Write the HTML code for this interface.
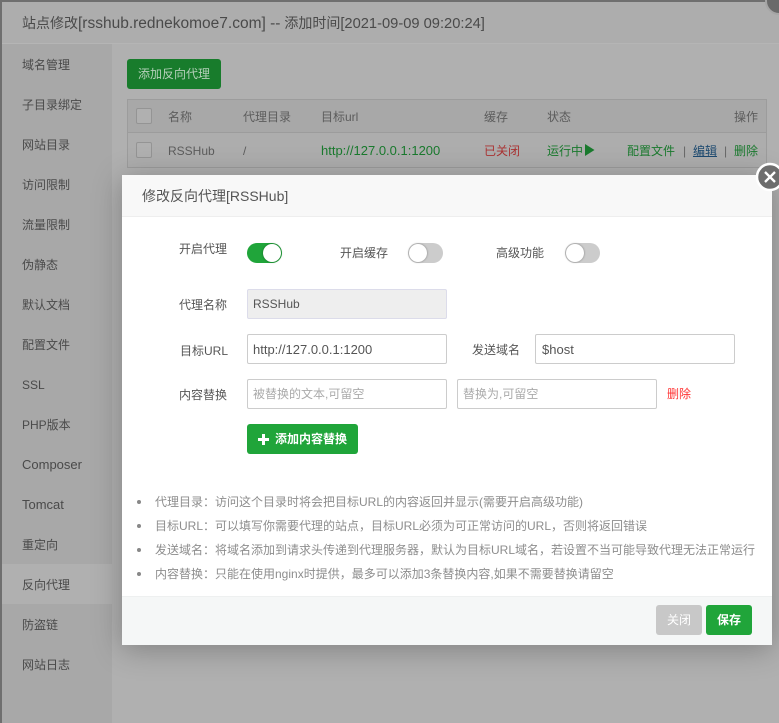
<!DOCTYPE html>
<html><head><meta charset="utf-8">
<style>
*{box-sizing:border-box}
html,body{margin:0;padding:0}
body{width:779px;height:723px;overflow:hidden;position:relative;background:#b0b0b0;font-family:"Liberation Sans","Noto Sans CJK SC",sans-serif;font-size:12px;color:#555}
.a{position:absolute;white-space:nowrap}
.side{left:22px;color:#4a4a4a;line-height:16px;margin-top:1px}
.th{top:109px;color:#5c5c5c;line-height:16px}
.td{top:143px;line-height:16px}
.g{color:#1a7a2e}
.cb{position:absolute;left:136px;width:16px;height:16px;border:1px solid #949494;border-radius:2px;background:#b0b0b0}
.lb{color:#555;line-height:16px}
.in{position:absolute;height:30px;width:200px;border:1px solid #ccc;border-radius:2px;background:#fff;padding-left:5px;line-height:29px;color:#555;white-space:nowrap}
.sw{position:absolute;width:35px;height:20px;border-radius:10px;background:#ccc}
.sw i{position:absolute;left:1px;top:1px;width:18px;height:18px;border-radius:50%;background:#fff;box-shadow:0 0 2px rgba(0,0,0,.4)}
.sw.on{background:#20a53a}
.sw.on i{left:16px}
.li{left:155px;color:#8d8d8d;line-height:16px}
.dot{position:absolute;left:137px;width:4px;height:4px;border-radius:50%;background:#888}
.btn{position:absolute;border-radius:3px;color:#fff;text-align:center}
</style></head><body>
<div class="a" style="left:0;top:0;width:779px;height:2px;background:#6f6f6f"></div>
<div class="a" style="left:0;top:0;width:2px;height:723px;background:#6f6f6f"></div>
<div class="a" style="left:2px;top:2px;width:777px;height:42px;background:#adadad;border-bottom:1px solid #b5b5b5"></div>
<div class="a" style="left:22px;top:14px;font-size:14px;line-height:18px;color:#4a4a4a">站点修改<span style="font-size:15.5px">[rsshub.rednekomoe7.com] --</span> 添加时间<span style="font-size:14.7px">[2021-09-09 09:20:24]</span></div>
<div class="a" style="left:2px;top:44px;width:110px;height:679px;background:#a8a8a8"></div>
<div class="a" style="left:2px;top:564px;width:110px;height:40px;background:#b0b0b0"></div>
<div class="a side" style="top:56px">域名管理</div>
<div class="a side" style="top:96px">子目录绑定</div>
<div class="a side" style="top:136px">网站目录</div>
<div class="a side" style="top:176px">访问限制</div>
<div class="a side" style="top:216px">流量限制</div>
<div class="a side" style="top:256px">伪静态</div>
<div class="a side" style="top:296px">默认文档</div>
<div class="a side" style="top:336px">配置文件</div>
<div class="a side" style="top:376px">SSL</div>
<div class="a side" style="top:416px">PHP版本</div>
<div class="a side" style="top:456px;font-size:13px">Composer</div>
<div class="a side" style="top:496px;font-size:13px">Tomcat</div>
<div class="a side" style="top:536px">重定向</div>
<div class="a side" style="top:576px">反向代理</div>
<div class="a side" style="top:616px">防盗链</div>
<div class="a side" style="top:656px">网站日志</div>

<div class="btn" style="left:127px;top:59px;width:94px;height:30px;background:#187c2c;color:#b5d0ba;line-height:31px">添加反向代理</div>
<div class="a" style="left:127px;top:99px;width:640px;height:69px;border:1px solid #9c9c9c;background:#adadad"></div>
<div class="a" style="left:128px;top:100px;width:638px;height:33px;background:#a8a8a8;border-bottom:1px solid #9c9c9c"></div>
<div class="cb" style="top:108px"></div><div class="cb" style="top:142px"></div>
<div class="a th" style="left:168px">名称</div>
<div class="a th" style="left:243px">代理目录</div>
<div class="a th" style="left:321px">目标url</div>
<div class="a th" style="left:484px">缓存</div>
<div class="a th" style="left:547px">状态</div>
<div class="a th" style="left:734px">操作</div>
<div class="a td" style="left:168px;color:#5c5c5c">RSSHub</div>
<div class="a td" style="left:243px;color:#5c5c5c">/</div>
<div class="a td g" style="left:321px;font-size:13px">http://127.0.0.1:1200</div>
<div class="a td" style="left:484px;color:#a33">已关闭</div>
<div class="a td g" style="left:547px">运行中</div>
<svg class="a" style="left:585px;top:144px" width="10" height="12"><path d="M0 0L9.500 6L0 12Z" fill="#1a7a2e"/></svg>
<div class="a td g" style="left:627px">配置文件</div>
<div class="a td" style="left:683px;color:#666">|</div>
<div class="a td" style="left:693px;color:#1d4a70;text-decoration:underline">编辑</div>
<div class="a td" style="left:724px;color:#666">|</div>
<div class="a td g" style="left:734px">删除</div>
<div class="a" style="left:765px;top:-13px;width:28px;height:28px;border-radius:50%;background:#6a6a6a;border:2px solid #a5a5a5"></div>

<div class="a" style="left:122px;top:175px;width:650px;height:470px;background:#fff;box-shadow:0 4px 28px rgba(0,0,0,.28)"></div>
<div class="a" style="left:122px;top:175px;width:650px;height:42px;background:#f8f8f8;border-bottom:1px solid #eee"></div>
<div class="a" style="left:142px;top:187px;font-size:14px;line-height:18px;color:#555">修改反向代理[RSSHub]</div>
<svg class="a" style="left:755px;top:162px" width="24" height="30" viewBox="0 0 24 30"><circle cx="15" cy="15" r="13" fill="#6d6d6d" stroke="#fff" stroke-width="2.500"/><path d="M10 10L20 20M20 10L10 20" stroke="#fff" stroke-width="2.300"/></svg>

<div class="a lb" style="left:179px;top:241px">开启代理</div>
<div class="sw on" style="left:247px;top:243px"><i></i></div>
<div class="a lb" style="left:340px;top:245px">开启缓存</div>
<div class="sw" style="left:408px;top:243px"><i></i></div>
<div class="a lb" style="left:496px;top:245px">高级功能</div>
<div class="sw" style="left:565px;top:243px"><i></i></div>

<div class="a lb" style="left:179px;top:297px">代理名称</div>
<div class="in" style="left:247px;top:289px;background:#eee;border-color:#dcdcea">RSSHub</div>
<div class="a lb" style="left:180px;top:343px">目标URL</div>
<div class="in" style="left:247px;top:334px;font-size:13px">http://127.0.0.1:1200</div>
<div class="a lb" style="left:472px;top:342px">发送域名</div>
<div class="in" style="left:535px;top:334px;font-size:13px;padding-left:6px">$host</div>
<div class="a lb" style="left:179px;top:387px">内容替换</div>
<div class="in" style="left:247px;top:379px;color:#aaa">被替换的文本,可留空</div>
<div class="in" style="left:457px;top:379px;color:#aaa">替换为,可留空</div>
<div class="a" style="left:667px;top:386px;color:#f33;line-height:16px">删除</div>
<div class="btn" style="left:247px;top:424px;width:111px;height:30px;background:#20a53a;line-height:30px;padding-left:17px;font-weight:bold;font-size:12px">添加内容替换</div>
<svg class="a" style="left:257px;top:433px" width="13" height="13"><path d="M6.500 1V12M1 6.500H12" stroke="#fff" stroke-width="3"/></svg>

<div class="dot" style="top:500px"></div><div class="a li" style="top:494px">代理目录：访问这个目录时将会把目标URL的内容返回并显示(需要开启高级功能)</div>
<div class="dot" style="top:524px"></div><div class="a li" style="top:518px">目标URL：可以填写你需要代理的站点，目标URL必须为可正常访问的URL，否则将返回错误</div>
<div class="dot" style="top:548px"></div><div class="a li" style="top:542px">发送域名：将域名添加到请求头传递到代理服务器，默认为目标URL域名，若设置不当可能导致代理无法正常运行</div>
<div class="dot" style="top:572px"></div><div class="a li" style="top:566px">内容替换：只能在使用nginx时提供，最多可以添加3条替换内容,如果不需要替换请留空</div>

<div class="a" style="left:122px;top:596px;width:650px;height:49px;background:#f5f7f7;border-top:1px solid #eef0f0"></div>
<div class="btn" style="left:656px;top:605px;width:46px;height:30px;background:#c8c8c8;line-height:31px">关闭</div>
<div class="btn" style="left:706px;top:605px;width:46px;height:30px;background:#20a53a;line-height:31px;font-weight:bold">保存</div>
</body></html>
